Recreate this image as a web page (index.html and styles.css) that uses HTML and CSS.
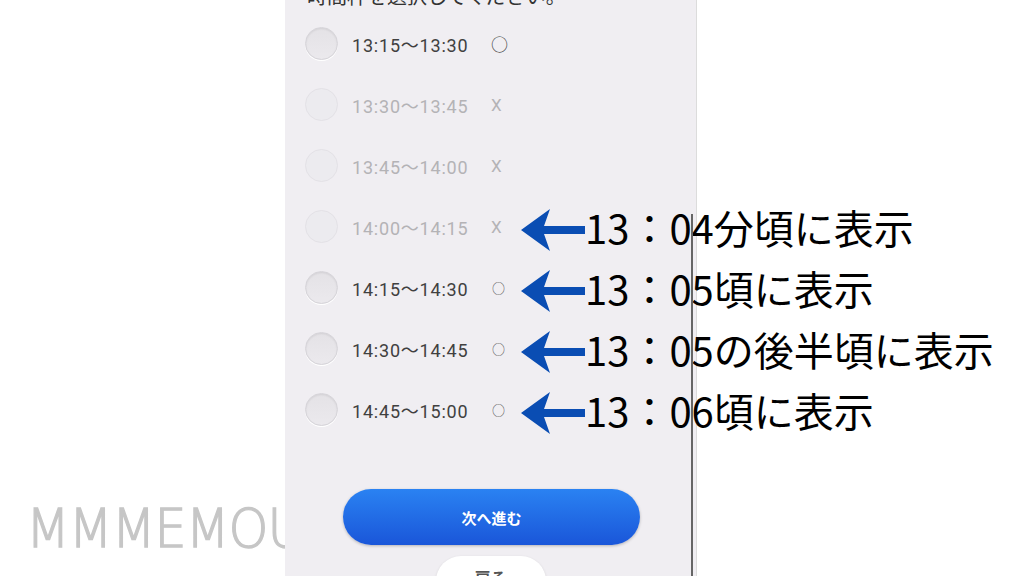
FILE: index.html
```html
<!DOCTYPE html>
<html lang="ja">
<head>
    <meta charset="UTF-8">
    <meta name="viewport" content="width=device-width, initial-scale=1.0">
    <title>時間枠の選択</title>
    <link rel="stylesheet" href="styles.css">
</head>
<body>
<div class="stage">
    <div class="brand">
        <span class="brand-mark">MMMEMOU</span>
    </div>

    <div class="phone">
        <p class="lead">時間枠を選択してください。</p>

        <ul class="slots">
            <li class="slot">
                <span class="radio"></span>
                <span class="time">13:15〜13:30</span>
                <span class="mark mark-big">○</span>
            </li>
            <li class="slot off">
                <span class="radio"></span>
                <span class="time">13:30〜13:45</span>
                <span class="mark">X</span>
            </li>
            <li class="slot off">
                <span class="radio"></span>
                <span class="time">13:45〜14:00</span>
                <span class="mark">X</span>
            </li>
            <li class="slot off">
                <span class="radio"></span>
                <span class="time">14:00〜14:15</span>
                <span class="mark">X</span>
                <svg class="arrow" viewBox="0 0 64 42"><path d="M0 21 L29 0 L23 17 L64 17 L64 25 L23 25 L29 42 Z"/></svg>
                <span class="note">13：04分頃に表示</span>
            </li>
            <li class="slot">
                <span class="radio"></span>
                <span class="time">14:15〜14:30</span>
                <span class="mark mark-small">○</span>
                <svg class="arrow" viewBox="0 0 64 42"><path d="M0 21 L29 0 L23 17 L64 17 L64 25 L23 25 L29 42 Z"/></svg>
                <span class="note">13：05頃に表示</span>
            </li>
            <li class="slot">
                <span class="radio"></span>
                <span class="time">14:30〜14:45</span>
                <span class="mark mark-small">○</span>
                <svg class="arrow" viewBox="0 0 64 42"><path d="M0 21 L29 0 L23 17 L64 17 L64 25 L23 25 L29 42 Z"/></svg>
                <span class="note">13：05の後半頃に表示</span>
            </li>
            <li class="slot">
                <span class="radio"></span>
                <span class="time">14:45〜15:00</span>
                <span class="mark mark-small">○</span>
                <svg class="arrow" viewBox="0 0 64 42"><path d="M0 21 L29 0 L23 17 L64 17 L64 25 L23 25 L29 42 Z"/></svg>
                <span class="note">13：06頃に表示</span>
            </li>
        </ul>

        <div class="actions">
            <a class="btn-next" href="#">次へ進む</a>
            <a class="btn-back" href="#">戻る</a>
        </div>
    </div>
</div>
</body>
</html>
```

FILE: styles.css
```css
body {
    margin: 0;
    background-color: #fff;
    font-family: "Noto Sans CJK JP", "Noto Sans", sans-serif;
    color: #333;
}
.stage {
    display: flex;
    width: 1024px;
    height: 576px;
    overflow: hidden;
}
.brand {
    width: 285px;
    flex-shrink: 0;
    overflow: hidden;
    white-space: nowrap;
    padding-top: 497px;
    box-sizing: border-box;
}
.brand-mark {
    display: inline-block;
    margin-left: 26px;
    font-family: "DejaVu Sans", sans-serif;
    font-weight: 200;
    font-size: 54px;
    color: #c6c6c6;
    -webkit-text-stroke: 1.3px #c6c6c6;
    transform: scaleX(0.94);
    transform-origin: left center;
    letter-spacing: -1px;
}
.phone {
    position: relative;
    width: 412px;
    flex-shrink: 0;
    background-color: #f0eef2;
    border-right: 1px solid #dcdcdc;
    padding-left: 20px;
    box-sizing: border-box;
}
.phone::after {
    content: "";
    position: absolute;
    right: 3px;
    top: 214px;
    bottom: 0;
    width: 2px;
    background-color: #666;
    z-index: 2;
}
.lead {
    margin: -16px 0 0 2px;
    font-size: 20px;
    line-height: 24px;
    color: #333;
}
.slots {
    list-style: none;
    margin: 5px 0 0;
    padding: 0;
}
.slot {
    display: flex;
    align-items: center;
    height: 61px;
    white-space: nowrap;
}
.slot > * {
    flex-shrink: 0;
}
.radio {
    width: 31px;
    height: 31px;
    border-radius: 50%;
    border: 1px solid #d6d4d9;
    background: linear-gradient(#e4e2e6, #ebe9ed);
    box-shadow: inset 0 1px 2px rgba(0, 0, 0, 0.08), 0 1px 0 #fff;
}
.time {
    width: 139px;
    margin-left: 14px;
    font-family: Roboto, "Noto Sans CJK JP", sans-serif;
    font-size: 18px;
    letter-spacing: 0.8px;
    color: #404040;
}
.mark {
    width: 16px;
    font-family: Roboto, "Noto Sans CJK JP", sans-serif;
    font-size: 17px;
    color: #555;
    text-align: left;
}
.mark-big {
    font-family: "Noto Sans CJK JP", sans-serif;
    font-size: 17px;
    color: #444;
    margin-left: 0;
}
.mark-small {
    font-family: "Noto Sans CJK JP", sans-serif;
    font-size: 13px;
    color: #555;
    margin-left: 1px;
    margin-right: -1px;
}
.off .radio {
    background: #ecebef;
    border-color: #e3e1e6;
    box-shadow: none;
}
.off .time,
.off .mark {
    color: #b4b3b6;
}
.arrow {
    width: 64px;
    height: 42px;
    margin-left: 14px;
    margin-top: 6px;
    fill: #0a4db3;
}
.note {
    position: relative;
    z-index: 1;
    margin-left: 0;
    font-size: 40px;
    color: #000;
}
.actions {
    display: flex;
    flex-direction: column;
    align-items: center;
    margin-top: 49px;
    margin-left: -20px;
    gap: 11px;
}
.btn-next {
    display: flex;
    align-items: center;
    justify-content: center;
    width: 297px;
    height: 56px;
    margin-left: 2px;
    border-radius: 28px;
    background: linear-gradient(#2a82f2, #1a56d9);
    box-shadow: 0 1px 3px rgba(0, 0, 0, 0.25);
    color: #fff;
    font-size: 15px;
    font-weight: bold;
    text-decoration: none;
}
.btn-back {
    display: flex;
    justify-content: center;
    width: 110px;
    height: 50px;
    padding-top: 9px;
    box-sizing: border-box;
    border-radius: 25px;
    background-color: #fff;
    box-shadow: 0 1px 3px rgba(0, 0, 0, 0.12);
    color: #555;
    font-size: 16px;
    font-weight: bold;
    text-decoration: none;
}
```
